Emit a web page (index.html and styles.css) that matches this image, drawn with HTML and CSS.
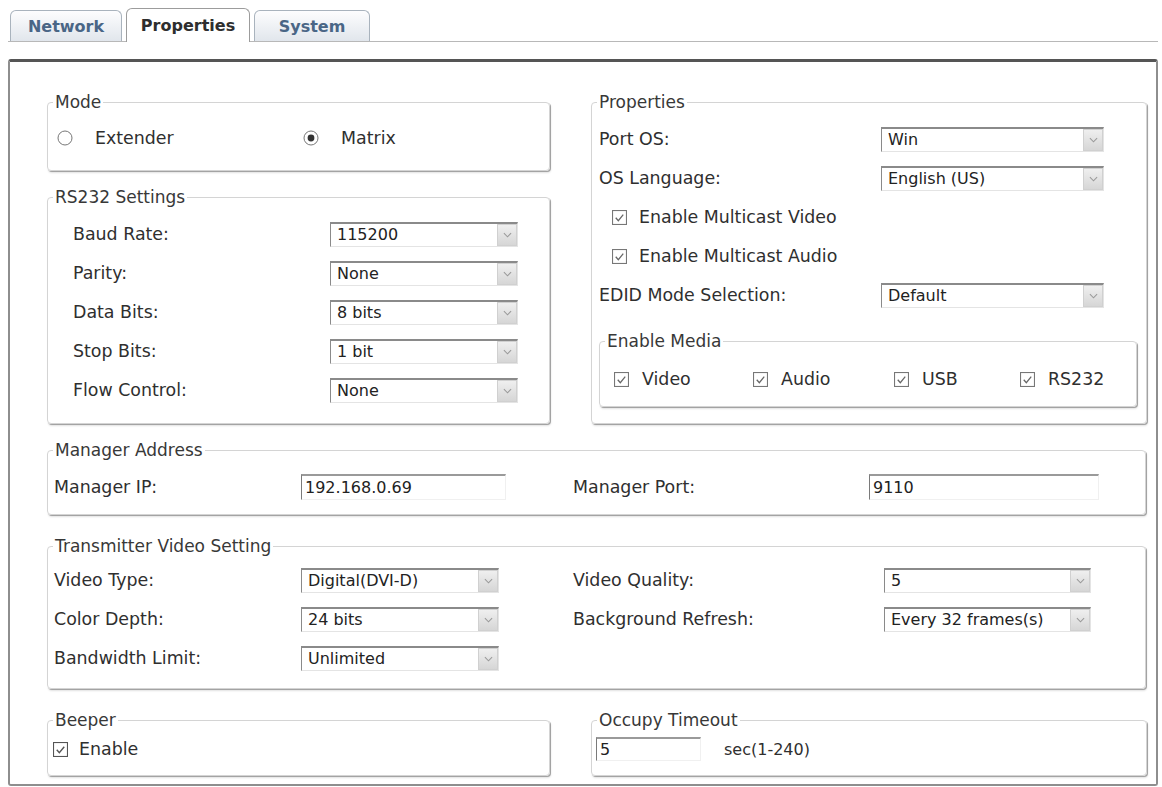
FILE: index.html
```html
<!DOCTYPE html>
<html lang="en">
<head>
    <meta charset="UTF-8">
    <meta name="viewport" content="width=device-width, initial-scale=1.0">
    <title>Properties</title>
    <link rel="stylesheet" href="styles.css">
</head>
<body>
    <div class="tabs">
        <div class="tab tab-network">Network</div>
        <div class="tab tab-props active">Properties</div>
        <div class="tab tab-system">System</div>
    </div>

    <div class="panel">
        <div class="top-row">
            <div class="col-left">
                <fieldset class="box mode">
                    <legend>Mode</legend>
                    <div class="radio-row">
                        <label class="radio">
                            <svg viewBox="0 0 16 16" width="16" height="16"><circle cx="8" cy="8" r="7" fill="#fff" stroke="#777"/></svg>
                            Extender
                        </label>
                        <label class="radio">
                            <svg viewBox="0 0 16 16" width="16" height="16"><circle cx="8" cy="8" r="7" fill="#fff" stroke="#777"/><circle cx="8" cy="8" r="3.4" fill="#333"/></svg>
                            Matrix
                        </label>
                    </div>
                </fieldset>

                <fieldset class="box rs232">
                    <legend>RS232 Settings</legend>
                    <div class="field">
                        <span class="lbl">Baud Rate:</span>
                        <div class="combo"><span>115200</span><span class="arrow"><svg viewBox="0 0 10 6" width="9" height="6"><path d="M1 1l4 4 4-4" fill="none" stroke="#9a9a9a" stroke-width="1.2"/></svg></span></div>
                    </div>
                    <div class="field">
                        <span class="lbl">Parity:</span>
                        <div class="combo"><span>None</span><span class="arrow"><svg viewBox="0 0 10 6" width="9" height="6"><path d="M1 1l4 4 4-4" fill="none" stroke="#9a9a9a" stroke-width="1.2"/></svg></span></div>
                    </div>
                    <div class="field">
                        <span class="lbl">Data Bits:</span>
                        <div class="combo"><span>8 bits</span><span class="arrow"><svg viewBox="0 0 10 6" width="9" height="6"><path d="M1 1l4 4 4-4" fill="none" stroke="#9a9a9a" stroke-width="1.2"/></svg></span></div>
                    </div>
                    <div class="field">
                        <span class="lbl">Stop Bits:</span>
                        <div class="combo"><span>1 bit</span><span class="arrow"><svg viewBox="0 0 10 6" width="9" height="6"><path d="M1 1l4 4 4-4" fill="none" stroke="#9a9a9a" stroke-width="1.2"/></svg></span></div>
                    </div>
                    <div class="field">
                        <span class="lbl">Flow Control:</span>
                        <div class="combo"><span>None</span><span class="arrow"><svg viewBox="0 0 10 6" width="9" height="6"><path d="M1 1l4 4 4-4" fill="none" stroke="#9a9a9a" stroke-width="1.2"/></svg></span></div>
                    </div>
                </fieldset>
            </div>

            <fieldset class="box props">
                <legend>Properties</legend>
                <div class="field">
                    <span class="lbl">Port OS:</span>
                    <div class="combo"><span>Win</span><span class="arrow"><svg viewBox="0 0 10 6" width="9" height="6"><path d="M1 1l4 4 4-4" fill="none" stroke="#9a9a9a" stroke-width="1.2"/></svg></span></div>
                </div>
                <div class="field">
                    <span class="lbl">OS Language:</span>
                    <div class="combo"><span>English (US)</span><span class="arrow"><svg viewBox="0 0 10 6" width="9" height="6"><path d="M1 1l4 4 4-4" fill="none" stroke="#9a9a9a" stroke-width="1.2"/></svg></span></div>
                </div>
                <div class="field check-row">
                    <svg class="cb" viewBox="0 0 14 14" width="15" height="15"><rect x="0.5" y="0.5" width="13" height="13" fill="#fff" stroke="#777"/><path d="M3.5 7.2l2.4 2.8 4.6-5.6" fill="none" stroke="#666" stroke-width="1.2"/></svg>
                    <span>Enable Multicast Video</span>
                </div>
                <div class="field check-row">
                    <svg class="cb" viewBox="0 0 14 14" width="15" height="15"><rect x="0.5" y="0.5" width="13" height="13" fill="#fff" stroke="#777"/><path d="M3.5 7.2l2.4 2.8 4.6-5.6" fill="none" stroke="#666" stroke-width="1.2"/></svg>
                    <span>Enable Multicast Audio</span>
                </div>
                <div class="field">
                    <span class="lbl">EDID Mode Selection:</span>
                    <div class="combo"><span>Default</span><span class="arrow"><svg viewBox="0 0 10 6" width="9" height="6"><path d="M1 1l4 4 4-4" fill="none" stroke="#9a9a9a" stroke-width="1.2"/></svg></span></div>
                </div>

                <fieldset class="box media">
                    <legend>Enable Media</legend>
                    <div class="media-row">
                        <label class="media-item m-video">
                            <svg class="cb" viewBox="0 0 14 14" width="15" height="15"><rect x="0.5" y="0.5" width="13" height="13" fill="#fff" stroke="#777"/><path d="M3.5 7.2l2.4 2.8 4.6-5.6" fill="none" stroke="#666" stroke-width="1.2"/></svg>
                            Video
                        </label>
                        <label class="media-item m-audio">
                            <svg class="cb" viewBox="0 0 14 14" width="15" height="15"><rect x="0.5" y="0.5" width="13" height="13" fill="#fff" stroke="#777"/><path d="M3.5 7.2l2.4 2.8 4.6-5.6" fill="none" stroke="#666" stroke-width="1.2"/></svg>
                            Audio
                        </label>
                        <label class="media-item m-usb">
                            <svg class="cb" viewBox="0 0 14 14" width="15" height="15"><rect x="0.5" y="0.5" width="13" height="13" fill="#fff" stroke="#777"/><path d="M3.5 7.2l2.4 2.8 4.6-5.6" fill="none" stroke="#666" stroke-width="1.2"/></svg>
                            USB
                        </label>
                        <label class="media-item">
                            <svg class="cb" viewBox="0 0 14 14" width="15" height="15"><rect x="0.5" y="0.5" width="13" height="13" fill="#fff" stroke="#777"/><path d="M3.5 7.2l2.4 2.8 4.6-5.6" fill="none" stroke="#666" stroke-width="1.2"/></svg>
                            RS232
                        </label>
                    </div>
                </fieldset>
            </fieldset>
        </div>

        <fieldset class="box manager">
            <legend>Manager Address</legend>
            <div class="field">
                <span class="lbl lbl-a">Manager IP:</span>
                <input class="text ip" type="text" value="192.168.0.69">
                <span class="lbl lbl-b">Manager Port:</span>
                <input class="text port" type="text" value="9110">
            </div>
        </fieldset>

        <fieldset class="box video">
            <legend>Transmitter Video Setting</legend>
            <div class="field">
                <span class="lbl lbl-a">Video Type:</span>
                <div class="combo combo-a"><span>Digital(DVI-D)</span><span class="arrow"><svg viewBox="0 0 10 6" width="9" height="6"><path d="M1 1l4 4 4-4" fill="none" stroke="#9a9a9a" stroke-width="1.2"/></svg></span></div>
                <span class="lbl lbl-c">Video Quality:</span>
                <div class="combo combo-b"><span>5</span><span class="arrow"><svg viewBox="0 0 10 6" width="9" height="6"><path d="M1 1l4 4 4-4" fill="none" stroke="#9a9a9a" stroke-width="1.2"/></svg></span></div>
            </div>
            <div class="field">
                <span class="lbl lbl-a">Color Depth:</span>
                <div class="combo combo-a"><span>24 bits</span><span class="arrow"><svg viewBox="0 0 10 6" width="9" height="6"><path d="M1 1l4 4 4-4" fill="none" stroke="#9a9a9a" stroke-width="1.2"/></svg></span></div>
                <span class="lbl lbl-c">Background Refresh:</span>
                <div class="combo combo-b"><span>Every 32 frames(s)</span><span class="arrow"><svg viewBox="0 0 10 6" width="9" height="6"><path d="M1 1l4 4 4-4" fill="none" stroke="#9a9a9a" stroke-width="1.2"/></svg></span></div>
            </div>
            <div class="field">
                <span class="lbl lbl-a">Bandwidth Limit:</span>
                <div class="combo combo-a"><span>Unlimited</span><span class="arrow"><svg viewBox="0 0 10 6" width="9" height="6"><path d="M1 1l4 4 4-4" fill="none" stroke="#9a9a9a" stroke-width="1.2"/></svg></span></div>
            </div>
        </fieldset>

        <div class="bottom-row">
            <fieldset class="box beeper">
                <legend>Beeper</legend>
                <label class="beep">
                    <svg class="cb" viewBox="0 0 14 14" width="15" height="15"><rect x="0.5" y="0.5" width="13" height="13" fill="#fff" stroke="#555"/><path d="M3.5 7.2l2.4 2.8 4.6-5.6" fill="none" stroke="#555" stroke-width="1.3"/></svg>
                    Enable
                </label>
            </fieldset>
            <fieldset class="box occupy">
                <legend>Occupy Timeout</legend>
                <div class="occupy-row">
                    <input class="text timeout" type="text" value="5">
                    <span class="unit">sec(1-240)</span>
                </div>
            </fieldset>
        </div>
    </div>
</body>
</html>
```

FILE: styles.css
```css
* {
    box-sizing: border-box;
}

body, html {
    margin: 0;
    padding: 0;
}

body {
    font-family: "DejaVu Sans", Verdana, sans-serif;
    font-size: 17.4px;
    color: #2f2f2f;
    background: #fff;
}

/* tab strip */
.tabs {
    display: flex;
    align-items: flex-end;
    gap: 4px;
    height: 34px;
    margin: 8px 4px 0 8px;
    padding-left: 2px;
    border-bottom: 1px solid #b8b8b8;
}

.tab {
    height: 31px;
    display: flex;
    align-items: center;
    justify-content: center;
    font-size: 16px;
    font-weight: bold;
    color: #4a6686;
    border: 1px solid #a9b3bd;
    border-bottom: none;
    border-radius: 6px 6px 0 0;
    background: linear-gradient(#fdfdfe, #e1e6ec);
}

.tab-network { width: 112px; }
.tab-props { width: 124px; }
.tab-system { width: 116px; }

.tab.active {
    height: 34px;
    margin-bottom: -1px;
    color: #2e2e2e;
    background: #fff;
    border-color: #9c9c9c;
}

/* main panel */
.panel {
    width: 1150px;
    height: 727px;
    margin: 17px 4px 0 8px;
    padding: 30px 10px 0 37px;
    border: 2px solid #8e8e8e;
    border-top: 3px solid #555;
    border-radius: 3px;
}

.top-row, .bottom-row {
    display: grid;
    grid-template-columns: 503px 556px;
    column-gap: 41px;
    align-items: start;
}

.bottom-row {
    margin-top: 21px;
}

.col-left {
    display: flex;
    flex-direction: column;
    gap: 16px;
}

fieldset.box {
    margin: 0;
    padding: 0;
    min-width: 0;
    border: 1px solid #d4d4d4;
    border-radius: 4px;
    box-shadow: 1px 1px 0 #a3a3a3, 1px 2px 2px rgba(0, 0, 0, 0.12);
}

/* legend sits inside the padding box, so each box pulls it back to the same spot */
legend {
    padding: 0 2px;
    font-size: 17px;
    line-height: 20px;
    color: #383838;
}

.field {
    display: flex;
    align-items: center;
    height: 28px;
}

.field + .field {
    margin-top: 11px;
}

.lbl {
    flex: none;
}

/* dropdowns */
.combo {
    flex: none;
    height: 25px;
    display: flex;
    align-items: center;
    justify-content: space-between;
    padding-left: 6px;
    font-size: 16px;
    color: #222;
    background: #fff;
    border-top: 2px solid #8a8a8a;
    border-left: 1px solid #8a8a8a;
    border-right: 1px solid #e4e4e4;
    border-bottom: 1px solid #e4e4e4;
}

.combo .arrow {
    width: 20px;
    height: 22px;
    display: flex;
    align-items: center;
    justify-content: center;
    background: linear-gradient(#efefef, #d6d6d6);
    border: 1px solid #d0d0d0;
}

.text {
    height: 26px;
    padding: 0 3px;
    font-family: "DejaVu Sans", Verdana, sans-serif;
    font-size: 16px;
    color: #222;
    background: #fff;
    border: none;
    border-top: 2px solid #9a9a9a;
    border-left: 1px solid #7a7a7a;
    border-right: 1px solid #f0f0f0;
    border-bottom: 1px solid #f0f0f0;
    outline: none;
}

.cb {
    flex: none;
}

/* mode */
.mode {
    padding: 16px 0 22px 9px !important;
}

.mode legend { margin-left: -4px; }

.radio-row {
    display: flex;
    height: 20px;
    align-items: center;
}

.radio {
    display: flex;
    align-items: center;
    width: 262px;
}

.radio svg {
    margin-right: 22px;
}

/* rs232 */
.rs232 {
    padding: 13px 0 19px 25px !important;
}

.rs232 legend { margin-left: -20px; }

.rs232 .lbl { width: 257px; }
.rs232 .combo { width: 188px; }

/* properties */
.props {
    padding: 13px 9px 16px 7px !important;
}

.props legend { margin-left: -2px; }

.props > .field .lbl { width: 282px; }
.props > .field .combo { width: 223px; }

.check-row {
    padding-left: 13px;
}

.check-row .cb {
    margin-right: 12px;
}

.media {
    margin-top: 22px !important;
    padding: 14px 0 13px 14px !important;
}

.props .media legend { margin-left: -9px; }

.media-row {
    display: flex;
    align-items: center;
    height: 28px;
}

.media-item {
    display: flex;
    align-items: center;
}

.media-item .cb {
    margin-right: 13px;
}

.m-video { width: 139px; }
.m-audio { width: 141px; }
.m-usb { width: 126px; }

/* manager address */
.manager {
    margin-top: 16px !important;
    padding: 13px 0 13px 6px !important;
}

.manager legend { margin-left: -1px; }

.lbl-a { width: 247px; }

.ip { width: 205px; }

.lbl-b {
    width: 296px;
    margin-left: 67px;
}

.port { width: 230px; }

/* transmitter video */
.video {
    margin-top: 21px !important;
    padding: 10px 0 16px 6px !important;
}

.video legend { margin-left: -1px; }

.combo-a { width: 198px; }

.lbl-c {
    width: 311px;
    margin-left: 74px;
}

.combo-b { width: 207px; }

/* beeper / occupy */
.beeper {
    padding: 7px 0 14px 5px !important;
}

.beep {
    display: flex;
    align-items: center;
    height: 24px;
}

.beep .cb {
    margin-right: 11px;
}

.occupy {
    padding: 7px 0 14px 4px !important;
}

.occupy legend { margin-left: 1px; }

.occupy-row {
    display: flex;
    align-items: center;
    height: 24px;
}

.timeout {
    width: 105px;
    height: 24px;
}

.unit {
    margin-left: 23px;
    font-size: 16px;
}
```
